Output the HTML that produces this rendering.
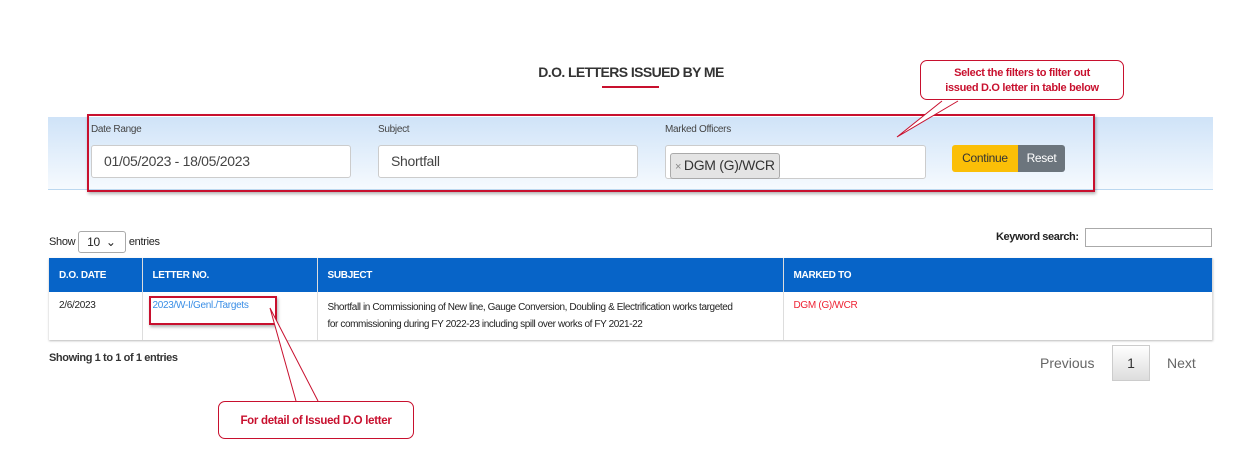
<!DOCTYPE html>
<html><head><style>
body{margin:0;width:1250px;height:465px;background:#fff;font-family:"Liberation Sans",sans-serif;position:relative;overflow:hidden;color:#222}
.a{position:absolute}
.lbl{font-size:10px;color:#444;letter-spacing:-0.3px}
.inp{background:#fff;border:1px solid #ccc;border-radius:3px;font-size:14px;color:#444;box-sizing:border-box;padding:0 12px;line-height:31px;letter-spacing:-0.3px}
table{table-layout:fixed}
th,td{font-size:10px;text-align:left;border-right:1px solid #ddd;letter-spacing:-0.3px;overflow:hidden;box-sizing:border-box}
</style></head><body>
<div class="a" style="left:0;top:64px;width:1262px;text-align:center;font-size:14px;font-weight:bold;color:#333;letter-spacing:-0.6px">D.O. LETTERS ISSUED BY ME</div>
<div class="a" style="left:602px;top:86px;width:57px;height:2px;background:#c8102e"></div>
<div class="a" style="left:48px;top:117px;width:1165px;height:72px;background:linear-gradient(#cfe3f8,#f6fafe);border-bottom:1px solid #bcd8f0"></div>
<div class="a" style="left:87px;top:114px;width:1004px;height:74px;border:2px solid #c8102e;box-shadow:1px 2px 3px rgba(0,0,0,.3)"></div>
<div class="a lbl" style="left:91px;top:124px">Date Range</div>
<div class="a lbl" style="left:378px;top:124px">Subject</div>
<div class="a lbl" style="left:665px;top:124px">Marked Officers</div>
<div class="a inp" style="left:91px;top:145px;width:260px;height:33px">01/05/2023 - 18/05/2023</div>
<div class="a inp" style="left:378px;top:145px;width:260px;height:33px">Shortfall</div>
<div class="a inp" style="left:665px;top:145px;width:261px;height:34px;padding:4px"><span style="display:inline-block;background:#e4e4e4;border:1px solid #aaa;border-radius:3px;line-height:22px;padding:0 4px;font-size:14px;color:#333"><span style="color:#888;font-size:11px">× </span>DGM (G)/WCR</span></div>
<div class="a" style="left:952px;top:145px;width:66px;height:27px;background:#fbbf07;border-radius:3px 0 0 3px;font-size:12px;line-height:27px;text-align:center;color:#333;letter-spacing:-0.3px">Continue</div>
<div class="a" style="left:1018px;top:145px;width:47px;height:27px;background:#6c757d;border-radius:0 3px 3px 0;font-size:12px;line-height:27px;text-align:center;color:#fff;letter-spacing:-0.3px">Reset</div>
<svg class="a" style="left:890px;top:95px" width="80" height="50"><path d="M52 6 L7 42 L68 6" fill="#fff" stroke="#c8102e" stroke-width="1"/></svg>
<div class="a" style="left:920px;top:60px;width:204px;height:40px;border:1px solid #c8102e;border-radius:7px;background:#fff;color:#c8102e;font-size:11px;font-weight:bold;text-align:center;line-height:15px;padding-top:5px;box-sizing:border-box;letter-spacing:-0.3px">Select the filters to filter out<br>issued D.O letter in table below</div>
<div class="a" style="left:49px;top:231px;font-size:11px;letter-spacing:-0.3px">Show <span style="display:inline-block;border:1px solid #aaa;border-radius:3px;width:48px;height:22px;line-height:20px;box-sizing:border-box;padding-left:8px;vertical-align:middle;font-size:12px">10 &nbsp;⌄</span> entries</div>
<div class="a" style="left:996px;top:231px;font-size:11px;font-weight:bold;letter-spacing:-0.4px">Keyword search:</div>
<div class="a" style="left:1085px;top:228px;width:127px;height:19px;border:1px solid #aaa;box-sizing:border-box"></div>
<table class="a" style="left:49px;top:258px;width:1164px;border-collapse:collapse;box-shadow:0 1px 2px #bbb">
<colgroup><col style="width:93px"><col style="width:175px"><col style="width:466px"><col></colgroup>
<tr style="background:#0764c8;color:#fff;height:34px"><th style="padding-left:10px;color:#fff">D.O. DATE</th><th style="padding-left:10px;color:#fff">LETTER NO.</th><th style="padding-left:10px;color:#fff">SUBJECT</th><th style="padding-left:10px;color:#fff">MARKED TO</th></tr>
<tr style="height:48px;background:#fff;vertical-align:top"><td style="padding:8px 10px 0">2/6/2023</td><td style="padding:8px 10px 0;color:#3a8ee6">2023/W-I/Genl./Targets</td><td style="padding:7px 10px 0;line-height:17px;letter-spacing:-0.4px"><div style="width:410px">Shortfall in Commissioning of New line, Gauge Conversion, Doubling &amp; Electrification works targeted for commissioning during FY 2022-23 including spill over works of FY 2021-22</div></td><td style="padding:8px 10px 0;color:#e23">DGM (G)/WCR</td></tr>
</table>
<div class="a" style="left:149px;top:296px;width:124px;height:25px;border:2px solid #c8102e;box-shadow:1px 2px 3px rgba(0,0,0,.3)"></div>
<svg class="a" style="left:260px;top:300px" width="80" height="105"><path d="M36 101 L10 8 L58 101" fill="#fff" stroke="#c8102e" stroke-width="1"/></svg>
<div class="a" style="left:218px;top:401px;width:196px;height:38px;border:1px solid #c8102e;border-radius:7px;background:#fff;color:#c8102e;font-size:11.5px;font-weight:bold;text-align:center;line-height:38px;box-sizing:border-box;letter-spacing:-0.3px">For detail of Issued D.O letter</div>
<div class="a" style="left:49px;top:352px;font-size:11px;font-weight:bold;color:#333;letter-spacing:-0.4px">Showing 1 to 1 of 1 entries</div>
<div class="a" style="left:1040px;top:355px;font-size:14px;color:#666">Previous</div>
<div class="a" style="left:1112px;top:345px;width:38px;height:36px;border:1px solid #ccc;background:linear-gradient(#fff,#ddd);box-sizing:border-box;text-align:center;line-height:34px;font-size:14px;color:#333">1</div>
<div class="a" style="left:1167px;top:355px;font-size:14px;color:#666">Next</div>
</body></html>
